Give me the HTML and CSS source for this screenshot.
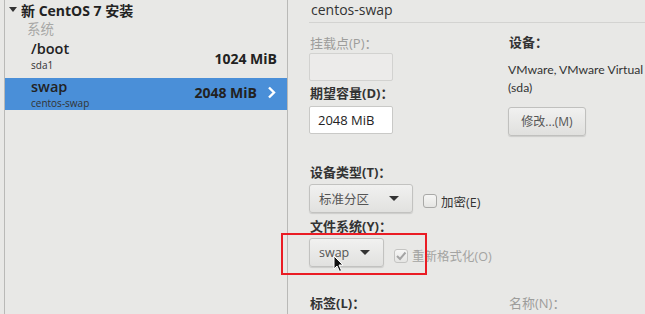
FILE: index.html
```html
<!DOCTYPE html>
<html>
<head>
<meta charset="utf-8">
<link rel="stylesheet" href="styles.css">
</head>
<body>
<div class="page">
  <div class="left">
    <div class="group-title"><span class="tri"></span>新 CentOS 7 安装</div>
    <div class="section">系统</div>
    <div class="row">
      <div class="names"><div class="mp">/boot</div><div class="dev">sda1</div></div>
      <div class="size">1024 MiB</div>
    </div>
    <div class="row sel">
      <div class="names"><div class="mp">swap</div><div class="dev">centos-swap</div></div>
      <div class="size">2048 MiB</div>
      <svg class="chev" width="9" height="13" viewBox="0 0 9 13"><path d="M2 1.5 L7 6.5 L2 11.5" fill="none" stroke="#fff" stroke-width="2.4"/></svg>
    </div>
  </div>
  <div class="right">
    <div class="title">centos-swap</div>
    <div class="grid">
      <div class="col1">
        <div class="lbl dim l1">挂载点(P)：</div>
        <div class="entry disabled"></div>
        <div class="lbl b l2">期望容量(D)：</div>
        <div class="entry">2048 MiB</div>
      </div>
      <div class="col2">
        <div class="lbl b l1">设备：</div>
        <div class="devtext">VMware, VMware Virtual S<br>(sda)</div>
        <div class="btn">修改...(M)</div>
      </div>
    </div>
    <div class="lbl b l3">设备类型(T)：</div>
    <div class="line">
      <div class="combo wide"><span>标准分区</span><span class="arrow"></span></div>
      <div class="check"></div><span class="chk-lbl">加密(E)</span>
    </div>
    <div class="lbl b l4">文件系统(Y)：</div>
    <div class="line hl">
      <div class="combo narrow"><span>swap</span><span class="arrow"></span></div>
      <div class="check on"><svg width="12" height="12" viewBox="0 0 12 12"><path d="M2 6 L5 9 L10.5 2.5" fill="none" stroke="#a4a4a4" stroke-width="2"/></svg></div><span class="chk-lbl dim">重新格式化(O)</span>
      <div class="redbox"></div>
      <svg class="cursor" width="12" height="18" viewBox="0 0 12 18"><path d="M1 1 L1 14 L4 11 L6.5 16.5 L8.5 15.5 L6 10 L10 10 Z" fill="#111" stroke="#fff" stroke-width="1"/></svg>
    </div>
    <div class="grid2">
      <div class="lbl b">标签(L)：</div>
      <div class="lbl dim">名称(N)：</div>
    </div>
  </div>
</div>
</body>
</html>
```
FILE: styles.css
```css
html, body {
  margin: 0;
  padding: 0;
  background: #e8e8e6;
  width: 645px;
  height: 314px;
  overflow: hidden;
  font-family: "Open Sans", "Noto Sans CJK SC", sans-serif;
  color: #2e3436;
}
.page {
  display: flex;
  height: 314px;
}
.left {
  margin-left: 4px;
  width: 282px;
  border-left: 1px solid #b9b9b7;
  border-right: 1px solid #b9b9b7;
  height: 314px;
  flex: none;
}
.group-title {
  display: flex;
  align-items: center;
  font-size: 14px;
  font-weight: 700;
  height: 19px;
  padding-left: 4px;
  color: #222;
}
.tri {
  width: 0; height: 0;
  border-left: 4px solid transparent;
  border-right: 4px solid transparent;
  border-top: 5px solid #333;
  margin-right: 4px;
}
.section {
  font-size: 13.5px;
  color: #a8a8a6;
  padding-left: 22px;
  height: 20px;
  line-height: 20px;
}
.row {
  display: flex;
  align-items: center;
  padding-left: 26px;
  padding-right: 10px;
  height: 38px;
}
.row:not(.sel) { margin-top: -2px; }
.row.sel {
  background: #4a8fd8;
  height: 32px;
  padding-right: 11px;
  margin-top: 3px;
}
.names { flex: 1; }
.mp {
  font-size: 14.5px;
  font-weight: 600;
  line-height: 16px;
  color: #222;
}
.dev {
  font-size: 10px;
  line-height: 11px;
  margin-top: 3px;
  color: #333;
}
.size {
  font-size: 14px;
  font-weight: 700;
  color: #222;
}
.row:not(.sel) .size { margin-top: 4px; }
.row.sel .size { margin-top: -3px; }
.chev { margin-left: 10px; margin-top: -3px; }
.right {
  flex: 1;
  padding-left: 21px;
  font-size: 13px;
}
.title {
  font-size: 14px;
  font-weight: 500;
  color: #333;
  height: 22px;
  line-height: 20px;
  border-bottom: 1px solid #d3d3d1;
  padding-left: 2px;
}
.grid {
  display: grid;
  grid-template-columns: 199px 1fr;
}
.lbl {
  font-size: 13px;
  line-height: 15px;
  padding-left: 1px;
}
.lbl.b { font-weight: 700; color: #333; }
.lbl.dim { color: #9d9d9b; }
.l1 { margin-top: 13px; }
.l2 { margin-top: 5px; }
.entry {
  width: 82px;
  height: 26px;
  border: 1px solid #c9c9c7;
  border-radius: 2px;
  background: #fff;
  margin-top: 5px;
  font-size: 13px;
  line-height: 26px;
  text-indent: 8px;
  color: #222;
}
.entry.disabled {
  background: #ecebea;
  border-color: #d2d2d0;
  margin-top: 2px;
}
.col2 .l1 { margin-top: 12px; }
.devtext {
  margin-top: 11px;
  line-height: 18px;
  color: #333;
  white-space: nowrap;
  font-family: "Lato", "Noto Sans CJK SC", sans-serif;
  font-size: 12.2px;
}
.btn {
  margin-top: 10px;
  width: 76px;
  height: 27px;
  border: 1px solid #c0c0be;
  border-radius: 3px;
  background: linear-gradient(#f1f1f0, #e0e0de);
  box-shadow: 0 1px 1px rgba(0,0,0,0.12);
  text-align: center;
  line-height: 27px;
  color: #555;
  font-size: 12px;
}
.l3 { margin-top: 29px; }
.l4 { margin-top: 6px; }
.line {
  display: flex;
  align-items: center;
  margin-top: 4px;
  position: relative;
}
.combo {
  display: flex;
  align-items: center;
  justify-content: space-between;
  height: 27px;
  border: 1px solid #c2c2c0;
  border-radius: 3px;
  background: linear-gradient(#f1f1f0, #e1e1df);
  box-shadow: 0 1px 1px rgba(0,0,0,0.12);
  padding: 0 13px 0 9px;
  color: #555;
  font-size: 12.5px;
}
.combo.wide { width: 80px; }
.combo.narrow { width: 51px; }
.arrow {
  width: 0; height: 0;
  border-left: 5px solid transparent;
  border-right: 5px solid transparent;
  border-top: 5px solid #333;
}
.check {
  width: 12px;
  height: 12px;
  border: 1px solid #a9a9a7;
  border-radius: 3px;
  background: linear-gradient(#f6f6f5, #e5e5e3);
  margin-left: 10px;
  margin-top: 5px;
  display: flex;
  align-items: center;
  justify-content: center;
}
.check.on { border-color: #c4c4c2; margin-top: 6px; }
.chk-lbl {
  margin-left: 4px;
  margin-top: 6px;
  font-size: 12.5px;
  color: #333;
}
.chk-lbl.dim { color: #a4a4a2; }
.redbox {
  position: absolute;
  left: -28px;
  top: -5px;
  width: 142px;
  height: 38px;
  border: 2px solid #ea1c24;
}
.cursor {
  position: absolute;
  left: 24px;
  top: 17px;
}
.grid2 {
  display: grid;
  grid-template-columns: 199px 1fr;
  margin-top: 29px;
}
```
